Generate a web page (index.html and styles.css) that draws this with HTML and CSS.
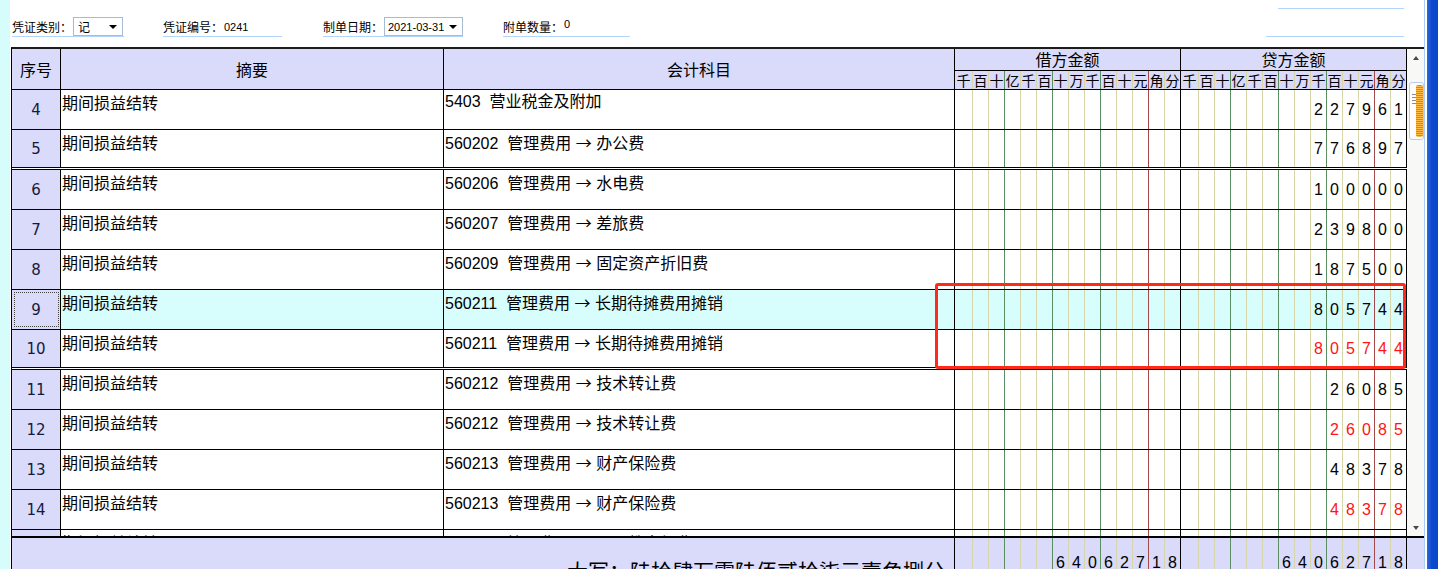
FILE: index.html
```html
<!DOCTYPE html>
<html lang="zh-CN">
<head>
  <meta charset="UTF-8">
  <meta name="viewport" content="width=device-width, initial-scale=1.0">
  <title>记账凭证</title>
  <link rel="stylesheet" href="styles.css">
</head>
<body>

<div class="page">
  <div class="strip"></div>

  <div class="main">
    <div class="toolbar">
      <div class="field f1">
        <span class="label">凭证类别：</span>
        <div class="combo c1"><span>记</span><span class="arrow"></span></div>
      </div>
      <div class="field f2">
        <span class="label">凭证编号：</span><span class="value v1">0241</span>
      </div>
      <div class="field f3">
        <span class="label">制单日期：</span>
        <div class="combo c2"><span>2021-03-31</span><span class="arrow"></span></div>
      </div>
      <div class="field f4">
        <span class="label">附单数量：</span><span class="value v2">0</span>
      </div>
      <div class="extra">
        <div class="line l1"></div>
        <div class="line l2"></div>
      </div>
    </div>

    <div class="voucher">
      <div class="grid">
        <div class="table">
          <div class="head">
            <div class="hc seq">序号</div>
            <div class="hc sum">摘要</div>
            <div class="hc acc">会计科目</div>
            <div class="hc money">
              <div class="mtitle">借方金额</div>
              <div class="amt units" id="unidadesDebe"></div>
            </div>
            <div class="hc money">
              <div class="mtitle">贷方金额</div>
              <div class="amt units" id="unidadesHaber"></div>
            </div>
          </div>
          <div class="body" id="filas"></div>
        </div>

        <div class="scrollbar">
          <div class="sb-btn"><span class="tri-up"></span></div>
          <div class="thumb">
            <span class="grip"></span>
            <span class="stripes"></span>
          </div>
          <div class="sb-space"></div>
          <div class="sb-btn"><span class="tri-down"></span></div>
        </div>
      </div>

      <div class="foot">
        <div class="ftext">大写：陆拾肆万零陆佰贰拾柒元壹角捌分</div>
        <div class="fmoney" id="totalDebe"></div>
        <div class="fmoney" id="totalHaber"></div>
        <div class="fside"></div>
      </div>
    </div>
  </div>

  <div class="edge"></div>

  <div class="mark"></div>
</div>

<script>
  // 金额格子的分隔线类型：千百十|亿千百|十万千|百十元|角分
  var tipos = ['', '', 'g', '', '', 'g', '', '', 'g', '', '', 'r', '', ''];
  var unidades = '千百十亿千百十万千百十元角分';

  // 凭证分录
  var filas = [
    {no: 4,  zy: '期间损益结转', km: '5403  营业税金及附加', dai: '227961'},
    {no: 5,  zy: '期间损益结转', km: '560202  管理费用 → 办公费', dai: '776897'},
    {no: 6,  zy: '期间损益结转', km: '560206  管理费用 → 水电费', dai: '100000'},
    {no: 7,  zy: '期间损益结转', km: '560207  管理费用 → 差旅费', dai: '239800'},
    {no: 8,  zy: '期间损益结转', km: '560209  管理费用 → 固定资产折旧费', dai: '187500'},
    {no: 9,  zy: '期间损益结转', km: '560211  管理费用 → 长期待摊费用摊销', dai: '805744', sel: true},
    {no: 10, zy: '期间损益结转', km: '560211  管理费用 → 长期待摊费用摊销', dai: '805744', rojo: true},
    {no: 11, zy: '期间损益结转', km: '560212  管理费用 → 技术转让费', dai: '26085'},
    {no: 12, zy: '期间损益结转', km: '560212  管理费用 → 技术转让费', dai: '26085', rojo: true},
    {no: 13, zy: '期间损益结转', km: '560213  管理费用 → 财产保险费', dai: '48378'},
    {no: 14, zy: '期间损益结转', km: '560213  管理费用 → 财产保险费', dai: '48378', rojo: true},
    {no: 15, zy: '期间损益结转', km: '560214  管理费用 → 职工教育经费', dai: '12000'}
  ];

  // 生成一组金额格子（右对齐到“分”）
  function celdasMonto(digitos, clase) {
    var html = '';
    var inicio = 14 - digitos.length;
    for (var i = 0; i < 14; i++) {
      var d = i >= inicio ? digitos.charAt(i - inicio) : '';
      html += '<span class="d ' + tipos[i] + '">' + d + '</span>';
    }
    return '<div class="amt ' + (clase || '') + '">' + html + '</div>';
  }

  // 表头的单位
  function generarUnidades(id) {
    var html = '';
    for (var i = 0; i < 14; i++) {
      html += '<span class="d ' + tipos[i] + '">' + unidades.charAt(i) + '</span>';
    }
    document.getElementById(id).innerHTML = html;
  }

  // 生成分录行
  function generarFilas() {
    var contenido = '';
    filas.forEach(function(fila) {
      var clases = 'row';
      if (fila.sel) clases += ' sel';
      if (fila.no % 5 === 0) clases += ' sep';
      var km = fila.km.replace('→', '<span class="arr">→</span>');
      contenido += '<div class="' + clases + '">';
      contenido += '<div class="c seq"><span class="no">' + fila.no + '</span></div>';
      contenido += '<div class="c sum">' + fila.zy + '</div>';
      contenido += '<div class="c acc">' + km + '</div>';
      contenido += '<div class="c money">' + celdasMonto('') + '</div>';
      contenido += '<div class="c money">' + celdasMonto(fila.dai, fila.rojo ? 'red' : '') + '</div>';
      contenido += '</div>';
    });
    document.getElementById('filas').innerHTML = contenido;
  }

  generarUnidades('unidadesDebe');
  generarUnidades('unidadesHaber');
  generarFilas();
  document.getElementById('totalDebe').innerHTML = celdasMonto('64062718');
  document.getElementById('totalHaber').innerHTML = celdasMonto('64062718');
</script>
</body>
</html>
```

FILE: styles.css
```css
* {
  box-sizing: border-box;
}
body {
  margin: 0;
  font-family: "Noto Sans CJK SC", sans-serif;
  background-color: #fff;
  color: #000;
}
.page {
  position: relative;
  display: flex;
  width: 1438px;
  height: 569px;
  overflow: hidden;
}
.strip {
  width: 10px;
  flex: none;
  background-color: #d6fcfc;
}
.main {
  width: 1415px;
  flex: none;
  border-right: 1px solid #a9cdf5;
  display: flex;
  flex-direction: column;
}
.edge {
  width: 11px;
  flex: none;
  margin-left: 2px;
  background: linear-gradient(to right, #2d68de, #0c48cc 45%, #0a46c8);
}

/* 顶部信息栏 */
.toolbar {
  height: 47px;
  flex: none;
  display: flex;
  align-items: flex-start;
  padding-left: 2px;
  font-size: 12px;
}
.field {
  margin-top: 17px;
  height: 20px;
  display: flex;
  align-items: center;
  border-bottom: 1px solid #b3d5fb;
}
.f1 { width: 112px; }
.f2 { width: 119px; margin-left: 39px; }
.f3 { width: 140px; margin-left: 41px; }
.f4 { width: 127px; margin-left: 40px; }
.label {
  width: 61px;
  flex: none;
  line-height: 19px;
}
.value {
  align-self: flex-start;
  font-family: "Liberation Sans", sans-serif;
  font-size: 11px;
  line-height: 13px;
}
.v1 { margin-top: 4px; }
.v2 { margin-top: 1px; }
.combo {
  height: 19px;
  display: flex;
  align-items: center;
  justify-content: space-between;
  padding: 0 5px 0 4px;
  border: 1px solid #a7bbd3;
  background-color: #fff;
}
.c1 { width: 50px; }
.c2 {
  width: 80px;
  font-family: "Liberation Sans", sans-serif;
  font-size: 11px;
  padding-left: 3px;
}
.arrow {
  border-left: 4px solid transparent;
  border-right: 4px solid transparent;
  border-top: 4px solid #000;
}
.extra {
  margin-left: auto;
  margin-right: 20px;
  width: 138px;
  display: flex;
  flex-direction: column;
  align-items: flex-end;
}
.line {
  border-top: 1px solid #b3d5fb;
}
.l1 { width: 126px; margin-top: 8px; }
.l2 { width: 138px; margin-top: 27px; }

/* 凭证表格 */
.voucher {
  margin-left: 1px;
  border-top: 2px solid #1c1c1c;
  border-left: 1px solid #000;
}
.grid {
  display: flex;
  border-bottom: 2px solid #000;
}
.table {
  width: 1395px;
  flex: none;
}
.head {
  display: flex;
  height: 41px;
  background-color: #dadafa;
  border-bottom: 1px solid #000;
}
.hc {
  border-right: 1px solid #000;
  display: flex;
  align-items: center;
  justify-content: center;
  font-size: 16px;
}
.seq { width: 49px; flex: none; }
.sum { width: 383px; flex: none; }
.acc { width: 511px; flex: none; }
.money { width: 226px; flex: none; }
.head .money {
  flex-direction: column;
  align-items: stretch;
}
.mtitle {
  height: 22px;
  border-bottom: 1px solid #000;
  text-align: center;
  line-height: 21px;
  font-size: 16px;
}
.units {
  flex: 1;
}
.units .d {
  font-family: "Noto Sans CJK SC", sans-serif;
  font-size: 14px;
  line-height: 17px;
}
.body {
  height: 446px;
  overflow: hidden;
}
.row {
  display: flex;
  height: 40px;
  border-bottom: 1px solid #000;
}
.row.sep {
  border-bottom: 3px double #000;
}
.c {
  border-right: 1px solid #000;
}
.row .seq {
  background-color: #dadafa;
  display: flex;
  align-items: center;
  justify-content: center;
  font-family: "DejaVu Sans", sans-serif;
  font-size: 15px;
  color: #141a3c;
}
.row .sum,
.row .acc {
  font-size: 16px;
  line-height: 20px;
  padding: 2px 0 0 1px;
  white-space: pre;
}
.row .acc {
  font-family: "Liberation Sans", "Noto Sans CJK SC", sans-serif;
}
.arr {
  font-family: "Noto Sans CJK SC", sans-serif;
}
.row.sel .sum,
.row.sel .acc,
.row.sel .money {
  background-color: #d7fdfd;
}
.row.sel .seq {
  outline: 1px dotted #444;
  outline-offset: -3px;
}

/* 金额格子 */
.amt {
  display: flex;
  height: 100%;
}
.d {
  width: 16px;
  flex: none;
  display: flex;
  align-items: center;
  justify-content: center;
  border-right: 1px solid #d6d6aa;
  font-family: "Liberation Sans", sans-serif;
  font-size: 16px;
}
.d:first-child {
  width: 18px;
}
.d:last-child {
  width: 15px;
  border-right: none;
}
.d.g {
  border-right-color: #5b8f62;
}
.d.r {
  border-right-color: #a54a4a;
}
.amt.red .d {
  color: #ff1414;
}

/* 滚动条 */
.scrollbar {
  width: 17px;
  flex: none;
  display: flex;
  flex-direction: column;
  background-color: #f8f8f6;
}
.sb-btn {
  height: 17px;
  display: flex;
  align-items: center;
  justify-content: center;
}
.tri-up {
  border-left: 3px solid transparent;
  border-right: 3px solid transparent;
  border-bottom: 4px solid #4a4a4a;
}
.tri-down {
  border-left: 3px solid transparent;
  border-right: 3px solid transparent;
  border-top: 4px solid #4a4a4a;
}
.thumb {
  margin: 16px 0 0 2px;
  height: 58px;
  display: flex;
  justify-content: space-between;
  border: 1px solid #bccbe6;
  border-radius: 3px;
  background-color: #fdfdfd;
}
.grip {
  width: 4px;
  height: 12px;
  margin: 11px 0 0 2px;
  background: repeating-linear-gradient(#8c8c8c 0 1px, transparent 1px 3px);
}
.stripes {
  width: 7px;
  margin: 2px 0;
  border-radius: 2px;
  background: repeating-linear-gradient(#dd8510 0 1px, #ffbb48 1px 2px);
}
.sb-space {
  flex: 1;
}

/* 合计行 */
.foot {
  display: flex;
  height: 50px;
  background-color: #dadafa;
}
.ftext {
  width: 943px;
  flex: none;
  border-right: 1px solid #000;
  text-align: right;
  padding: 20px 9px 0 0;
  font-size: 21px;
  line-height: 24px;
}
.fmoney {
  width: 226px;
  flex: none;
  border-right: 1px solid #000;
}
.fmoney .d {
  align-items: flex-start;
  padding-top: 16px;
}
.fside {
  width: 17px;
  flex: none;
}

/* 红色标注框 */
.mark {
  position: absolute;
  left: 935px;
  top: 283px;
  width: 471px;
  height: 86px;
  border: 3px solid #ff2a1a;
  border-radius: 3px;
}
```
